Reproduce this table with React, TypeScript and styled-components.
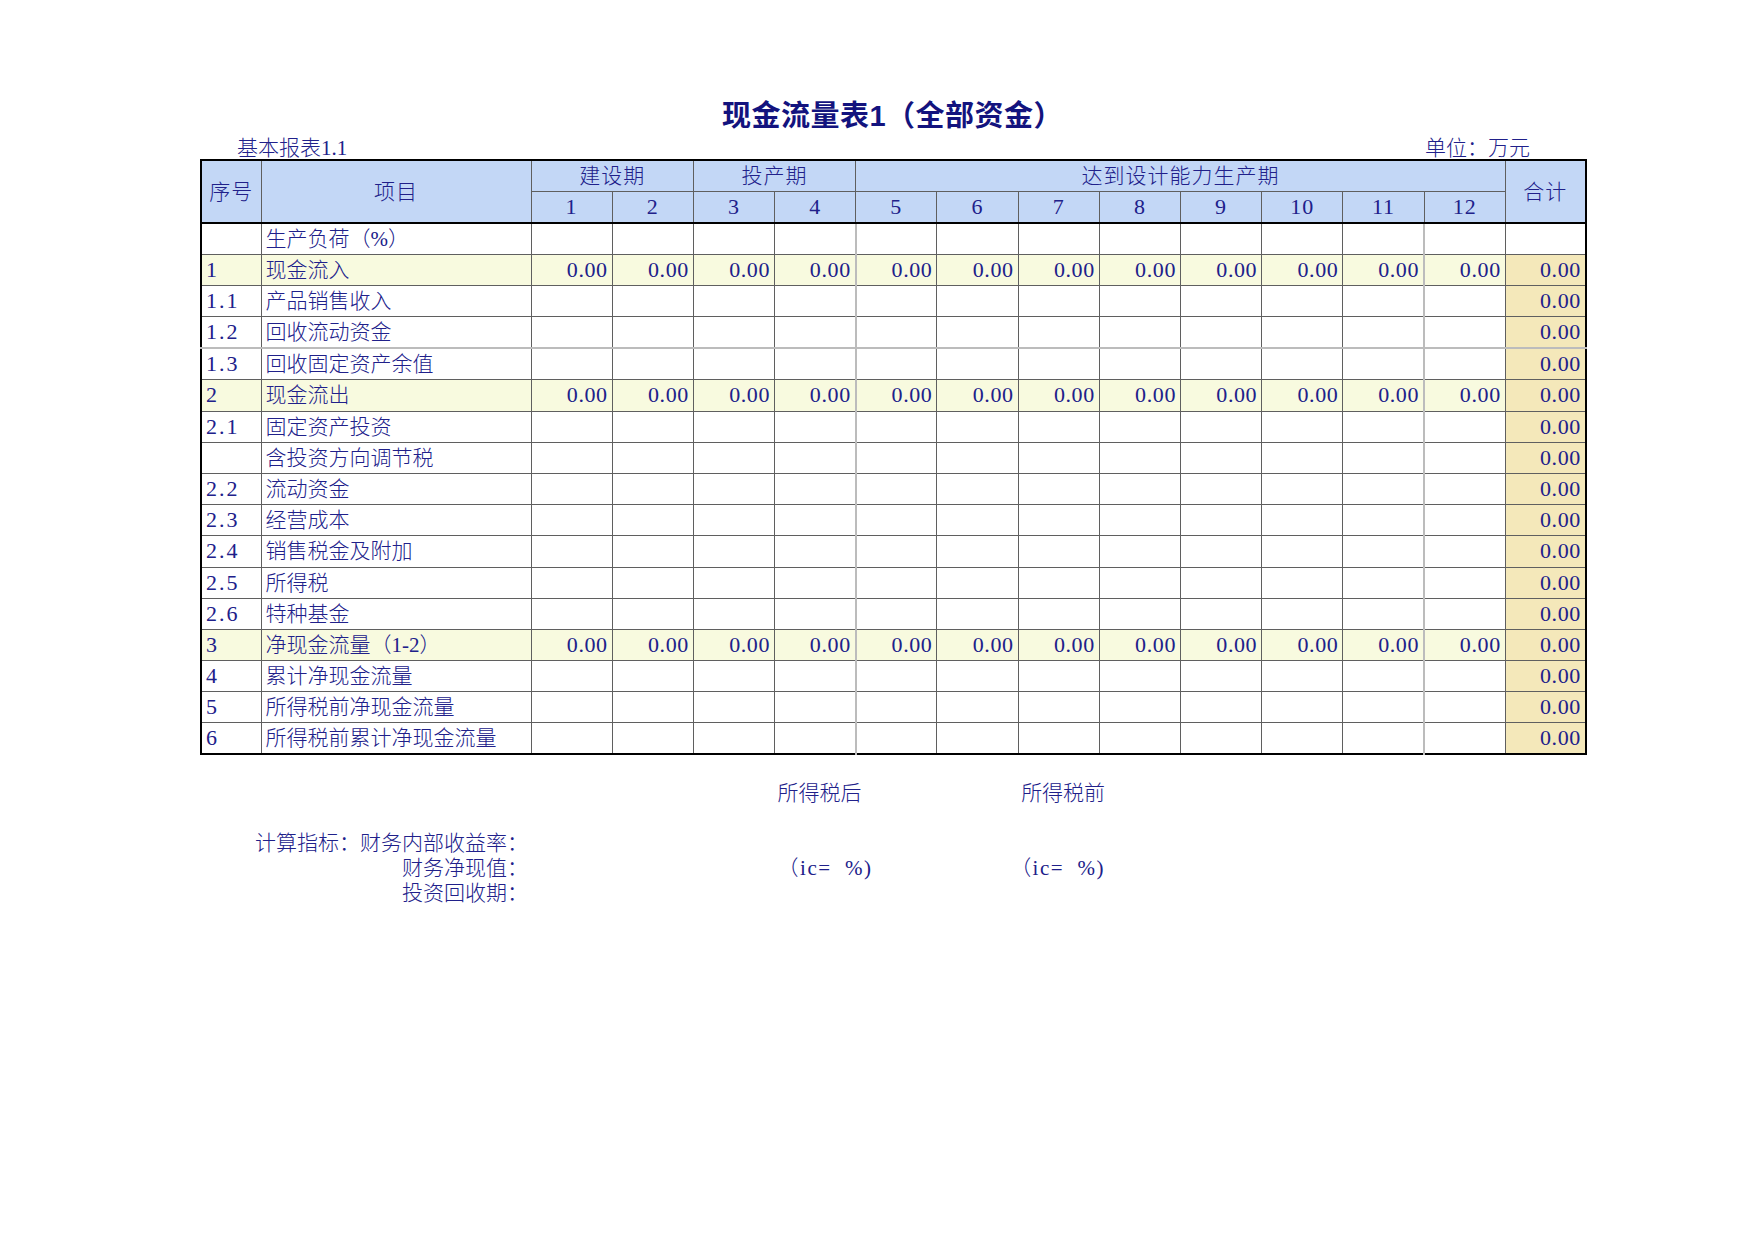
import React from "react";
import styled, { createGlobalStyle } from "styled-components";

const GlobalStyle = createGlobalStyle`
  html, body { margin: 0; padding: 0; background: #ffffff; }
  body { font-family: "Liberation Serif", "Noto Sans CJK SC", serif; color: #20208a; }
`;

const COLS = "60px 270px repeat(12, 81.2px) 80.6px";
const INK = "#20208a";

const Page = styled.div`
  padding: 99px 0 0 200px;
  width: 1385px;
`;

const Title = styled.h1`
  margin: 0;
  height: 34px;
  line-height: 34px;
  text-align: center;
  font-family: "Liberation Sans", "Noto Sans CJK SC", sans-serif;
  font-size: 29px;
  font-weight: 700;
  color: #13137e;
  letter-spacing: 0.5px;
`;

const MetaRow = styled.div`
  height: 26px;
  display: flex;
  justify-content: space-between;
  align-items: flex-end;
  padding: 0 55px 0 37px;
  font-size: 21px;
  line-height: 22px;
  font-weight: 300;
  color: ${INK};
`;

const Sheet = styled.table`
  border-collapse: collapse;
  table-layout: fixed;
  width: 1385px;
  border: 2px solid #000;
  font-size: 21px;
  line-height: 22px;
  font-weight: 300;
  color: ${INK};
`;

const Th = styled.th<{ $bottom?: boolean; $digits?: boolean }>`
  background: #c3d7f6;
  font-weight: 300;
  height: 30px;
  padding: 0;
  text-align: center;
  vertical-align: middle;
  font-size: ${(p) => (p.$digits ? "22px" : "21px")};
  letter-spacing: 1px;
  border: 1px solid #5f5f5f;
  border-bottom: ${(p) => (p.$bottom ? "2px solid #000" : "1px solid #5f5f5f")};
  white-space: nowrap;
`;

const Tr = styled.tr<{ $hl?: boolean }>`
  height: 31.2px;
  background: ${(p) => (p.$hl ? "#f8fadf" : "#ffffff")};
`;

const Td = styled.td<{
  $num?: boolean;
  $code?: boolean;
  $total?: boolean;
  $breakRight?: boolean;
  $breakBottom?: boolean;
}>`
  padding: 0 4px;
  height: 30px;
  vertical-align: middle;
  white-space: nowrap;
  overflow: hidden;
  text-align: ${(p) => (p.$num ? "right" : "left")};
  font-size: ${(p) => (p.$num || p.$code ? "22px" : "21px")};
  letter-spacing: ${(p) => (p.$num ? "0.6px" : p.$code ? "2px" : "0")};
  background: ${(p) => (p.$total ? "#f4e8ba" : "transparent")};
  border: 1px solid #5f5f5f;
  border-right: ${(p) => (p.$breakRight ? "2px solid #bcbcbc" : "1px solid #5f5f5f")};
  border-bottom: ${(p) => (p.$breakBottom ? "2px solid #bcbcbc" : "1px solid #5f5f5f")};
`;

const Footer = styled.div`
  display: grid;
  grid-template-columns: ${COLS};
  grid-template-rows: repeat(5, 25px);
  margin-top: 25px;
  font-size: 21px;
  line-height: 22px;
  font-weight: 300;
  color: ${INK};
`;

const FootLabel = styled.div<{ $row: number }>`
  grid-column: 1 / 3;
  grid-row: ${(p) => p.$row};
  text-align: right;
  align-self: center;
  padding-right: 2px;
  white-space: nowrap;
`;

const FootCell = styled.div<{ $row: number; $col: number; $spaced?: boolean; $shift?: number }>`
  grid-column: ${(p) => `${p.$col} / span 3`};
  grid-row: ${(p) => p.$row};
  align-self: center;
  padding-left: 4px;
  margin-left: ${(p) => `${p.$shift ?? 0}px`};
  white-space: pre;
  letter-spacing: ${(p) => (p.$spaced ? "1.5px" : "0")};
`;

type Row = { no: string; name: string; filled?: boolean; total?: boolean; breakBelow?: boolean };

const rows: Row[] = [
  { no: "", name: "生产负荷（%）" },
  { no: "1", name: "现金流入", filled: true, total: true },
  { no: "1.1", name: "产品销售收入", total: true },
  { no: "1.2", name: "回收流动资金", total: true, breakBelow: true },
  { no: "1.3", name: "回收固定资产余值", total: true },
  { no: "2", name: "现金流出", filled: true, total: true },
  { no: "2.1", name: "固定资产投资", total: true },
  { no: "", name: "含投资方向调节税", total: true },
  { no: "2.2", name: "流动资金", total: true },
  { no: "2.3", name: "经营成本", total: true },
  { no: "2.4", name: "销售税金及附加", total: true },
  { no: "2.5", name: "所得税", total: true },
  { no: "2.6", name: "特种基金", total: true },
  { no: "3", name: "净现金流量（1-2）", filled: true, total: true },
  { no: "4", name: "累计净现金流量", total: true },
  { no: "5", name: "所得税前净现金流量", total: true },
  { no: "6", name: "所得税前累计净现金流量", total: true },
];

const years = Array.from({ length: 12 }, (_, i) => i + 1);

export default function App() {
  return (
    <>
      <GlobalStyle />
      <Page>
        <Title>现金流量表1（全部资金）</Title>
        <MetaRow>
          <span>基本报表1.1</span>
          <span>单位：万元</span>
        </MetaRow>
        <Sheet>
          <colgroup>
            <col style={{ width: 60 }} />
            <col style={{ width: 270 }} />
            {years.map((y) => (
              <col key={y} style={{ width: 81.2 }} />
            ))}
            <col style={{ width: 80.6 }} />
          </colgroup>
          <thead>
            <tr>
              <Th rowSpan={2} $bottom>序号</Th>
              <Th rowSpan={2} $bottom>项目</Th>
              <Th colSpan={2}>建设期</Th>
              <Th colSpan={2}>投产期</Th>
              <Th colSpan={8}>达到设计能力生产期</Th>
              <Th rowSpan={2} $bottom>合计</Th>
            </tr>
            <tr>
              {years.map((y) => (
                <Th key={y} $bottom $digits>
                  {y}
                </Th>
              ))}
            </tr>
          </thead>
          <tbody>
            {rows.map((r, i) => (
              <Tr key={i} $hl={r.filled}>
                <Td $code $breakBottom={r.breakBelow}>{r.no}</Td>
                <Td $breakBottom={r.breakBelow}>{r.name}</Td>
                {years.map((y) => (
                  <Td
                    key={y}
                    $num
                    $breakRight={y === 4 || y === 11}
                    $breakBottom={r.breakBelow}
                  >
                    {r.filled ? "0.00" : ""}
                  </Td>
                ))}
                <Td $num $total={r.total} $breakBottom={r.breakBelow}>
                  {r.total ? "0.00" : ""}
                </Td>
              </Tr>
            ))}
          </tbody>
        </Sheet>
        <Footer>
          <FootCell $row={1} $col={6}>所得税后</FootCell>
          <FootCell $row={1} $col={9}>所得税前</FootCell>
          <FootLabel $row={3}>计算指标：财务内部收益率：</FootLabel>
          <FootLabel $row={4}>财务净现值：</FootLabel>
          <FootCell $row={4} $col={6} $spaced>{"（ic=  %)"}</FootCell>
          <FootCell $row={4} $col={9} $spaced $shift={-11}>{"（ic=  %)"}</FootCell>
          <FootLabel $row={5}>投资回收期：</FootLabel>
        </Footer>
      </Page>
    </>
  );
}
